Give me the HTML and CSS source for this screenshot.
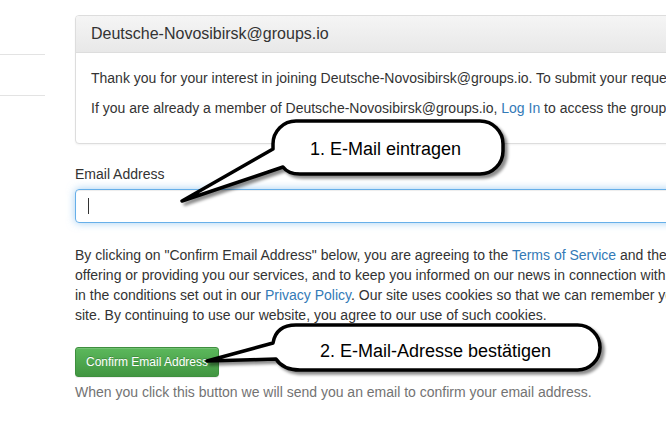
FILE: index.html
```html
<!DOCTYPE html>
<html lang="en">
<head>
<meta charset="utf-8">
<title>Join Deutsche-Novosibirsk@groups.io</title>
<link rel="stylesheet" href="styles.css">
</head>
<body>
<div class="page">
  <aside class="sidebar">
    <div class="side-item"></div>
    <div class="side-item"></div>
  </aside>
  <main class="main">
    <div class="panel">
      <div class="panel-heading"><h3 class="panel-title">Deutsche-Novosibirsk@groups.io</h3></div>
      <div class="panel-body">
        <p>Thank you for your interest in joining Deutsche-Novosibirsk@groups.io. To submit your request, please</p>
        <p>If you are already a member of Deutsche-Novosibirsk@groups.io, <a href="#">Log In</a> to access the group.</p>
      </div>
    </div>
    <form class="form">
      <label class="label">Email Address</label>
      <div class="input"><span class="caret"></span></div>
      <p class="terms">By clicking on "Confirm Email Address" below, you are agreeing to the <a href="#">Terms of Service</a> and the Privacy<br>offering or providing you our services, and to keep you informed on our news in connection with our<br>in the conditions set out in our <a href="#">Privacy Policy</a>. Our site uses cookies so that we can remember you<br>site. By continuing to use our website, you agree to our use of such cookies.</p>
      <div><button type="button" class="btn">Confirm Email Address</button></div>
      <p class="help">When you click this button we will send you an email to confirm your email address.</p>
    </form>
  </main>
  <svg class="notes" width="666" height="434" viewBox="0 0 666 434">
    <defs>
      <filter id="sh" x="-10%" y="-20%" width="130%" height="160%">
        <feDropShadow dx="3" dy="3" stdDeviation="1.6" flood-color="#000" flood-opacity="0.45"/>
      </filter>
    </defs>
    <path class="bubble" filter="url(#sh)" d="M296 121 H480 A23 23 0 0 1 503 144 V151 A23 23 0 0 1 480 174 H300 Q288 174 283 167 L182 201 L273 149 V144 A23 23 0 0 1 296 121 Z"/>
    <text class="note-text" x="310" y="154.5">1. E-Mail eintragen</text>
    <path class="bubble" filter="url(#sh)" d="M296 325 H577 A22.5 22.5 0 0 1 600 347.5 A22.5 22.5 0 0 1 577 370 H300 Q283 370 276 359 L207 361 L273 343 Q276 325 296 325 Z"/>
    <text class="note-text" x="320" y="357">2. E-Mail-Adresse bestätigen</text>
  </svg>
</div>
</body>
</html>
```

FILE: styles.css
```css
html, body {
  margin: 0;
  padding: 0;
  background: #fff;
}
body {
  font-family: "Liberation Sans", Arial, Helvetica, sans-serif;
  font-size: 14px;
  line-height: 20px;
  color: #333;
}
a {
  color: #337ab7;
  text-decoration: none;
}
.page {
  position: relative;
  display: flex;
  width: 666px;
  height: 434px;
  overflow: hidden;
}
.sidebar {
  flex: none;
  width: 45px;
  padding-top: 54px;
}
.side-item {
  box-sizing: border-box;
  height: 41px;
  border-top: 1px solid #e3e3e3;
}
.main {
  flex: none;
  width: 900px;
  margin-left: 30px;
  padding-top: 15px;
}
.panel {
  border: 1px solid #ddd;
  border-radius: 4px;
  box-shadow: 0 1px 2px rgba(0,0,0,.05);
  margin-bottom: 20px;
  background: #fff;
}
.panel-heading {
  padding: 9px 15px 10px;
  background: linear-gradient(#f5f5f5, #e8e8e8);
  border-bottom: 1px solid #ddd;
  border-radius: 3px 3px 0 0;
}
.panel-title {
  margin: 0;
  font-size: 16px;
  line-height: 17px;
  font-weight: normal;
  color: #333;
}
.panel-body {
  padding: 15px;
  white-space: nowrap;
}
.panel-body p {
  margin: 0 0 10px;
}
.form {
  margin: 0;
}
.label {
  display: block;
  margin-bottom: 5px;
}
.input {
  box-sizing: border-box;
  height: 34px;
  border: 1px solid #66afe9;
  border-radius: 4px;
  box-shadow: inset 0 1px 1px rgba(0,0,0,.075), 0 0 8px rgba(102,175,233,.6);
  padding: 7px 12px;
  display: flex;
  align-items: center;
}
.caret {
  display: block;
  width: 1px;
  height: 16px;
  background: #333;
}
.terms {
  margin: 22px 0 0;
  white-space: nowrap;
}
.btn {
  margin-top: 22px;
  font-family: "Liberation Sans", Arial, Helvetica, sans-serif;
  font-size: 12px;
  line-height: 18px;
  padding: 5px 10px;
  color: #fff;
  border: 1px solid #3e8f3e;
  border-radius: 3px;
  background: linear-gradient(#5cb85c, #419641);
  text-shadow: 0 -1px 0 rgba(0,0,0,.2);
  box-shadow: inset 0 1px 0 rgba(255,255,255,.15), 0 1px 1px rgba(0,0,0,.075);
}
.help {
  margin: 5px 0 0;
  color: #737373;
}
.notes {
  position: absolute;
  left: 0;
  top: 0;
  pointer-events: none;
}
.bubble {
  fill: #fff;
  stroke: #000;
  stroke-width: 3.5;
  stroke-linejoin: round;
}
.note-text {
  font-family: "Liberation Sans", Arial, sans-serif;
  font-size: 18px;
  fill: #000;
}
```
